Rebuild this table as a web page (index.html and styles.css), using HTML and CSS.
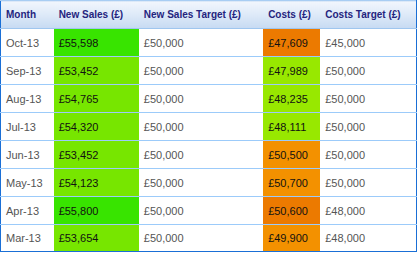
FILE: index.html
```html
<!DOCTYPE html>
<html>
<head>
<meta charset="utf-8">
<link rel="stylesheet" href="styles.css">
</head>
<body>
<table class="grid">
  <colgroup>
    <col class="c-month"><col class="c-sales"><col class="c-target"><col class="c-costs"><col class="c-ctarget">
  </colgroup>
  <thead>
    <tr>
      <th>Month</th><th>New Sales (£)</th><th>New Sales Target (£)</th><th>Costs (£)</th><th>Costs Target (£)</th>
    </tr>
  </thead>
  <tbody>
    <tr><td>Oct-13</td><td class="hi">£55,598</td><td>£50,000</td><td class="dark">£47,609</td><td>£45,000</td></tr>
    <tr><td>Sep-13</td><td class="lime">£53,452</td><td>£50,000</td><td class="yg">£47,989</td><td>£50,000</td></tr>
    <tr><td>Aug-13</td><td class="lime">£54,765</td><td>£50,000</td><td class="yg">£48,235</td><td>£50,000</td></tr>
    <tr><td>Jul-13</td><td class="lime">£54,320</td><td>£50,000</td><td class="yg">£48,111</td><td>£50,000</td></tr>
    <tr><td>Jun-13</td><td class="lime">£53,452</td><td>£50,000</td><td class="orange">£50,500</td><td>£50,000</td></tr>
    <tr><td>May-13</td><td class="lime">£54,123</td><td>£50,000</td><td class="orange">£50,700</td><td>£50,000</td></tr>
    <tr><td>Apr-13</td><td class="hi">£55,800</td><td>£50,000</td><td class="dark">£50,600</td><td>£48,000</td></tr>
    <tr class="last"><td>Mar-13</td><td class="lime">£53,654</td><td>£50,000</td><td class="orange">£49,900</td><td>£48,000</td></tr>
  </tbody>
</table>
</body>
</html>
```
FILE: styles.css
```css
html, body {
  margin: 0;
  padding: 0;
  background: #ffffff;
}
.grid {
  border-collapse: collapse;
  table-layout: fixed;
  width: 417px;
  border-left: 1px solid #1a6fd6;
  border-right: 1px solid #1a6fd6;
  border-bottom: 1px solid #1a6fd6;
  border-top: 1px solid #a8cdf3;
  font-family: "Liberation Sans", Arial, sans-serif;
}
.c-month { width: 53px; }
.c-sales { width: 85px; }
.c-target { width: 124px; }
.c-costs { width: 57px; }
.c-ctarget { width: 96px; }
th {
  height: 27px;
  padding: 0 0 0 5px;
  text-align: left;
  font-size: 10px;
  font-weight: bold;
  color: #24247e;
  background: linear-gradient(to bottom, #f1f6fd 0%, #dde9f8 50%, #c6daf2 100%);
  border-bottom: 1px solid #9fc6ef;
}
td {
  height: 27px;
  padding: 0 0 0 5px;
  font-size: 11px;
  color: #555555;
  border-bottom: 1px solid #9ccbfa;
  white-space: nowrap;
}
tr.last td {
  height: 26px;
  border-bottom: 1px solid #1a6fd6;
}
td.hi { background: #38e400; color: #111111; }
td.lime { background: #77e600; color: #111111; }
td.yg { background: #98e800; color: #111111; }
td.dark { background: #ec7a00; color: #111111; }
td.orange { background: #f39100; color: #111111; }
```
